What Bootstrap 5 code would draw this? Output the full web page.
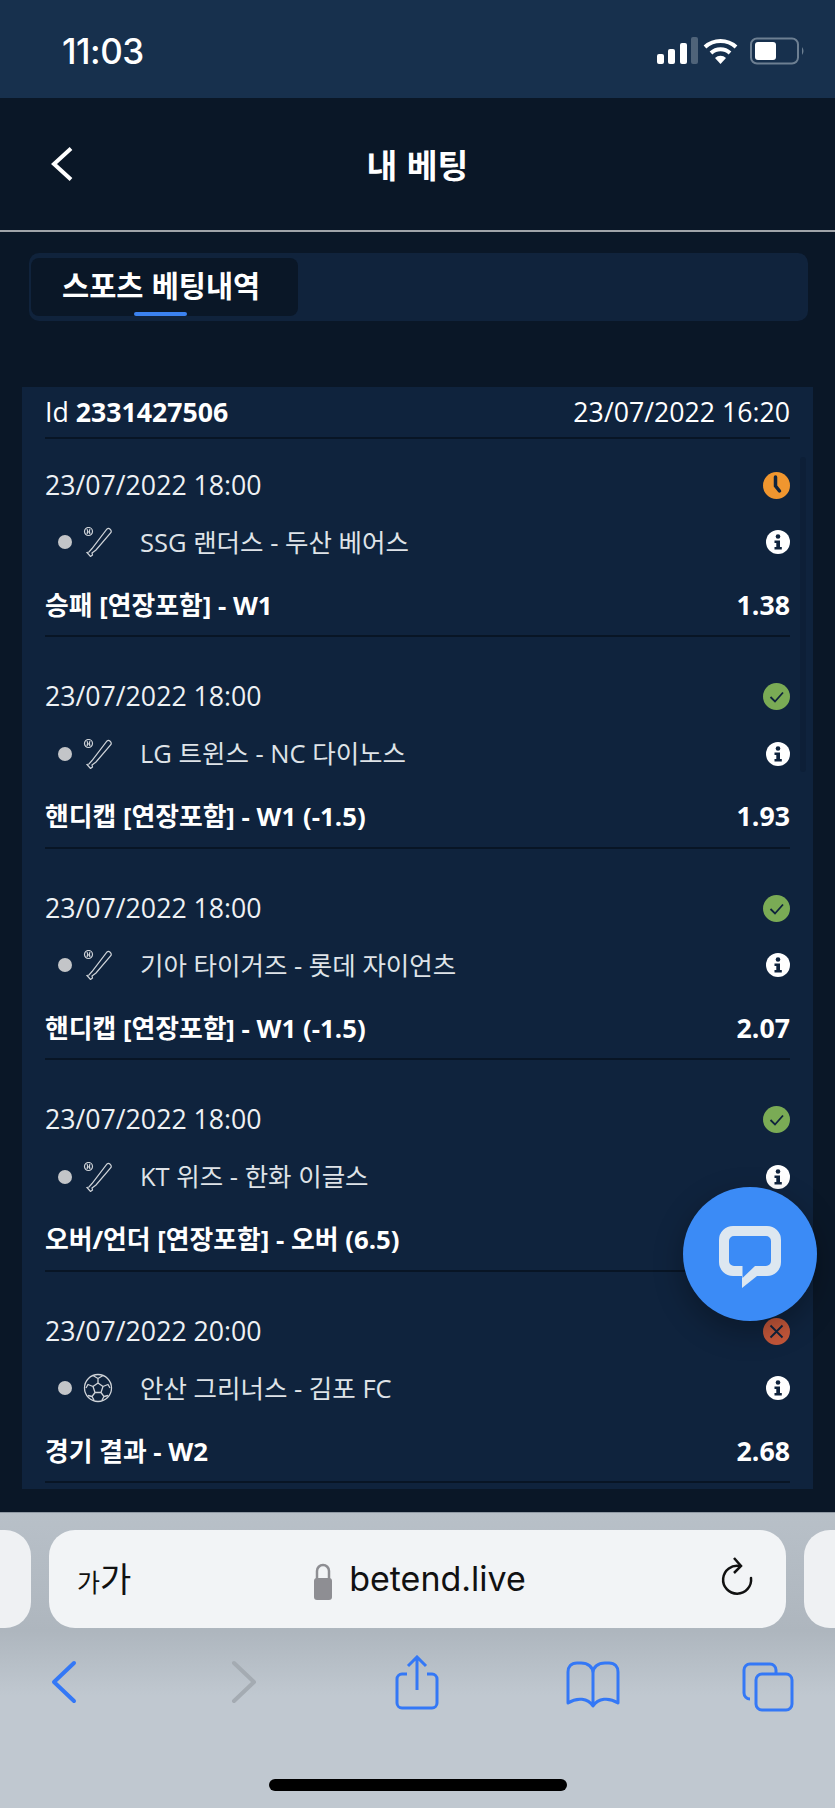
<!DOCTYPE html>
<html lang="ko">
<head>
<meta charset="utf-8">
<link href="https://cdn.jsdelivr.net/npm/bootstrap@5.3.0/dist/css/bootstrap.min.css" rel="stylesheet">
<style>
html,body{margin:0;background:#0a1727}
.phone{width:835px;height:1808px;overflow:hidden;position:relative;background:#0a1727;color:#fff;font-family:"Open Sans","Noto Sans CJK KR",sans-serif}
.status-strip{height:98px;background:#17304d;padding:4px 23px 0 62px}
.clock{font-family:"Inter","Liberation Sans",sans-serif;font-size:35px;font-weight:500;letter-spacing:-.5px}
.page-head{height:134px;border-bottom:2px solid #a0a4a9;padding:0 50px}
.page-title{font-size:33.500px;font-weight:700;font-family:"Noto Sans CJK KR",sans-serif;line-height:1}
.back-link{position:absolute;left:50px;top:146px;display:block;line-height:0}
.tab-shell{margin:21px 27px 0 29px;height:68px;background:#10233c;border-radius:10px;padding:5px 2px}
.tab-on{width:267px;height:58px;background:#0a1727;border-radius:8px;font-size:29.500px;font-weight:700;font-family:"Noto Sans CJK KR",sans-serif;position:relative;padding:7px 0 0 31px;line-height:1.3}
.tab-on::after{content:"";position:absolute;left:103px;bottom:0;width:53px;height:4px;border-radius:2px;background:#3b82f0}
.bet-panel{margin:66px 22px 0 22px;height:1102px;background:#0f233d;padding:0 23px;position:relative;overflow:hidden}
.bet-head{height:52px;border-bottom:2px solid #081525;font-size:26.700px;line-height:1}
.leg-list{padding-top:22px}
.leg{height:211.500px}
.leg-inner{height:176px;border-bottom:2px solid #081525;display:flex;flex-direction:column}
.leg-date{height:48px;font-size:26.700px;color:#eef1f4}
.leg-teams{height:66px;font-size:25.500px;color:#dfe3e8}
.leg-mkt{font-size:25.800px;font-weight:700;height:60px}
.leg-odd{font-size:26.700px}
.live-dot{width:14px;height:14px;border-radius:50%;background:#c3c5c8;margin:0 11px 0 13px;flex:none}
.sport-ico{width:30px;height:30px;margin-right:27px;flex:none}
.state-ico{width:27px;height:27px;flex:none}
.info-ico{width:24px;height:24px;flex:none}
.rail{position:absolute;left:778px;top:70px;width:6px;height:315px;background:#0d1f37;border-radius:3px}
.chat-fab{position:absolute;left:683px;top:1187px;width:134px;height:134px;border-radius:50%;background:#3b8bf6;box-shadow:0 10px 30px rgba(0,0,0,.3)}
.chat-glyph{margin-top:6px}
.safari{position:absolute;left:0;right:0;top:1512px;height:296px;background:linear-gradient(#b8c0c8,#aeb6be 40%,#c0c8d0 62%);border-top:1px solid #8f99a3}
.url-pill{position:absolute;left:49px;top:17px;width:737px;height:98px;background:#f2f4f6;border-radius:26px}
.side-pill{position:absolute;top:17px;height:98px;width:71px;background:#eff1f3;border-radius:26px}
.pill-left{left:-40px}
.pill-right{left:804px}
.aa-txt{position:absolute;left:28px;top:26px;color:#111;font-family:"Noto Sans CJK KR",sans-serif;line-height:1.3;font-size:34px}
.aa-small{font-size:25px}
.host-txt{font-size:34px;color:#111;font-family:"Inter","Liberation Sans",sans-serif;line-height:1}
.tool-ico{position:absolute;display:block}
.t-reload{right:32px;top:27px}
.t-back{left:50px;top:147px}
.t-fwd{left:230px;top:147px}
.t-share{left:394px;top:142px}
.t-book{left:565px;top:148px}
.t-tabs{left:742px;top:149px}
.home-bar{position:absolute;left:269px;top:266px;width:298px;height:12px;border-radius:6px;background:#000}
</style>
</head>
<body>
<div class="phone d-flex flex-column">
  <div class="status-strip d-flex justify-content-between align-items-center">
    <span class="clock">11:03</span>
    <svg width="157" height="28" viewBox="0 0 157 28"><g fill="#fff"><rect x="2" y="17" width="7" height="10" rx="2"/><rect x="13" y="12" width="7" height="15" rx="2"/><rect x="25" y="6" width="7" height="21" rx="2"/></g><rect x="36" y="0" width="7" height="27" rx="2" fill="#4f6379"/><g fill="none" stroke="#fff" stroke-width="4"><path d="M50 10a23 23 0 0 1 31 0"/><path d="M56 16a14 14 0 0 1 19 0"/></g><path d="M60 21a8 8 0 0 1 11 0l-5.500 6z" fill="#fff"/><rect x="96" y="1.500" width="47" height="25" rx="6" fill="none" stroke="#6d7f92" stroke-width="2"/><rect x="100" y="5" width="21" height="18" rx="3" fill="#fff"/><path d="M147 10q3 4 0 8z" fill="#6d7f92"/></svg>
  </div>
  <div class="page-head d-flex align-items-center justify-content-center">
    <span class="page-title">내 베팅</span>
  </div>
  <a class="back-link" href="#"><svg width="24" height="36" viewBox="0 0 24 36"><path d="M21 2.500 4 18l17 15.500" fill="none" stroke="#fff" stroke-width="4"/></svg></a>
  <div class="tab-shell">
    <div class="tab-on"><span>스포츠 베팅내역</span></div>
  </div>
  <div class="bet-panel">
    <div class="bet-head d-flex justify-content-between align-items-center"><span>Id <b>2331427506</b></span><span>23/07/2022 16:20</span></div>
    <div class="rail"></div>
    <div class="leg-list">

    <section class="leg"><div class="leg-inner">
      <div class="leg-date d-flex justify-content-between align-items-center"><span>23/07/2022 18:00</span>
        <svg class="state-ico" viewBox="0 0 27 27"><circle cx="13.500" cy="13.500" r="13.500" fill="#f0962f"/><path d="M12.500 5v9l4 5" fill="none" stroke="#0f233d" stroke-width="3.500" stroke-linecap="round"/></svg></div>
      <div class="leg-teams d-flex align-items-center"><i class="live-dot"></i>
        <svg class="sport-ico" viewBox="0 0 30 30"><use href="#bat"/></svg><span class="flex-grow-1">SSG 랜더스 - 두산 베어스</span><svg class="info-ico" viewBox="0 0 24 24"><use href="#inf"/></svg></div>
      <div class="leg-mkt d-flex justify-content-between align-items-center"><span>승패 [연장포함] - W1</span><span class="leg-odd">1.38</span></div>
    </div></section>

    <section class="leg"><div class="leg-inner">
      <div class="leg-date d-flex justify-content-between align-items-center"><span>23/07/2022 18:00</span>
        <svg class="state-ico" viewBox="0 0 27 27"><use href="#won"/></svg></div>
      <div class="leg-teams d-flex align-items-center"><i class="live-dot"></i>
        <svg class="sport-ico" viewBox="0 0 30 30"><use href="#bat"/></svg><span class="flex-grow-1">LG 트윈스 - NC 다이노스</span><svg class="info-ico" viewBox="0 0 24 24"><use href="#inf"/></svg></div>
      <div class="leg-mkt d-flex justify-content-between align-items-center"><span>핸디캡 [연장포함] - W1 (-1.5)</span><span class="leg-odd">1.93</span></div>
    </div></section>

    <section class="leg"><div class="leg-inner">
      <div class="leg-date d-flex justify-content-between align-items-center"><span>23/07/2022 18:00</span>
        <svg class="state-ico" viewBox="0 0 27 27"><use href="#won"/></svg></div>
      <div class="leg-teams d-flex align-items-center"><i class="live-dot"></i>
        <svg class="sport-ico" viewBox="0 0 30 30"><use href="#bat"/></svg><span class="flex-grow-1">기아 타이거즈 - 롯데 자이언츠</span><svg class="info-ico" viewBox="0 0 24 24"><use href="#inf"/></svg></div>
      <div class="leg-mkt d-flex justify-content-between align-items-center"><span>핸디캡 [연장포함] - W1 (-1.5)</span><span class="leg-odd">2.07</span></div>
    </div></section>

    <section class="leg"><div class="leg-inner">
      <div class="leg-date d-flex justify-content-between align-items-center"><span>23/07/2022 18:00</span>
        <svg class="state-ico" viewBox="0 0 27 27"><use href="#won"/></svg></div>
      <div class="leg-teams d-flex align-items-center"><i class="live-dot"></i>
        <svg class="sport-ico" viewBox="0 0 30 30"><use href="#bat"/></svg><span class="flex-grow-1">KT 위즈 - 한화 이글스</span><svg class="info-ico" viewBox="0 0 24 24"><use href="#inf"/></svg></div>
      <div class="leg-mkt d-flex justify-content-between align-items-center"><span>오버/언더 [연장포함] - 오버 (6.5)</span></div>
    </div></section>

    <section class="leg"><div class="leg-inner">
      <div class="leg-date d-flex justify-content-between align-items-center"><span>23/07/2022 20:00</span>
        <svg class="state-ico" viewBox="0 0 27 27"><circle cx="13.500" cy="13.500" r="13.500" fill="#c4573a"/><path d="M7.500 7.500l12 12M19.500 7.500l-12 12" stroke="#0f233d" stroke-width="1.800" fill="none"/></svg></div>
      <div class="leg-teams d-flex align-items-center"><i class="live-dot"></i>
        <svg class="sport-ico" viewBox="0 0 30 30"><g fill="none" stroke="#cfd3d8" stroke-width="1.300"><circle cx="15" cy="15" r="13.500"/><path d="M15 10l5 3.500-2 6h-6l-2-6zM15 10V5.500l-5-3M15 5.500l5-3M20 13.500l5-2 2 3.500M10 13.500l-5-2-2 3.500M18 19.500l3 4-2 3.500M12 19.500l-3 4 2 3.500M9 23.500l-4-1M21 23.500l4-1"/></g></svg><span class="flex-grow-1">안산 그리너스 - 김포 FC</span><svg class="info-ico" viewBox="0 0 24 24"><use href="#inf"/></svg></div>
      <div class="leg-mkt d-flex justify-content-between align-items-center"><span>경기 결과 - W2</span><span class="leg-odd">2.68</span></div>
    </div></section>
    </div>
  </div>

  <svg width="0" height="0" class="position-absolute"><defs>
    <g id="bat" fill="none" stroke="#cfd3d8" stroke-width="1.200"><circle cx="5.500" cy="4.500" r="4"/><path d="M4 2q1.500 2.500 0 5M7 2q-1.500 2.500 0 5"/><path d="M24 2c2-1.500 5 1 4 3.500L13 23l-4 3 .5 2-2 1.500-3.500-4 2-.5 3-3.500z"/></g>
    <g id="won"><circle cx="13.500" cy="13.500" r="13.500" fill="#7aab55"/><path d="M7.500 14l4.500 4.500 8-9" stroke="#0f233d" stroke-width="1.800" fill="none"/></g>
    <g id="inf"><circle cx="12" cy="12" r="12" fill="#fff"/><circle cx="12" cy="6.500" r="2.300" fill="#0f233d"/><path d="M8.500 10.500H14V17h1.800v2.500H8.500V17h1.800v-4H8.500z" fill="#0f233d"/></g>
  </defs></svg>

  <div class="chat-fab d-flex align-items-center justify-content-center">
    <svg class="chat-glyph" width="62" height="62" viewBox="0 0 62 62"><path d="M14 0h34a14 14 0 0 1 14 14v22a14 14 0 0 1-14 14H38L23 62V50H14A14 14 0 0 1 0 36V14A14 14 0 0 1 14 0zM15 10a5 5 0 0 0-5 5v20a5 5 0 0 0 5 5h8.500V52L36 40h11a5 5 0 0 0 5-5V15a5 5 0 0 0-5-5z" fill="#dde7f0" fill-rule="evenodd"/></svg>
  </div>

  <div class="safari">
    <div class="side-pill pill-left"></div>
    <div class="side-pill pill-right"></div>
    <div class="url-pill d-flex align-items-center justify-content-center gap-3">
      <span class="aa-txt"><span class="aa-small">가</span>가</span>
      <svg width="20" height="44" viewBox="0 0 20 44" class="ms-1"><path d="M4 22v-8a6 6 0 0 1 12 0v8" fill="none" stroke="#8e8e93" stroke-width="2.500"/><rect x="1" y="21" width="18" height="22" rx="3" fill="#8e8e93"/></svg>
      <span class="host-txt">betend.live</span>
      <svg class="tool-ico t-reload" width="36" height="40" viewBox="0 0 36 40"><path d="M22 9a14 14 0 1 0 11 12" fill="none" stroke="#111" stroke-width="2.500" stroke-linecap="round"/><path d="M16 1l7 8-7 7" fill="none" stroke="#111" stroke-width="2.500"/></svg>
    </div>
    <svg class="tool-ico t-back" width="28" height="44" viewBox="0 0 28 44"><path d="M24 3 4 22l20 19" fill="none" stroke="#3478f6" stroke-width="4" stroke-linecap="round" stroke-linejoin="round"/></svg>
    <svg class="tool-ico t-fwd" width="28" height="44" viewBox="0 0 28 44"><path d="M4 3l20 19L4 41" fill="none" stroke="#a4abb2" stroke-width="4" stroke-linecap="round" stroke-linejoin="round"/></svg>
    <svg class="tool-ico t-share" width="46" height="56" viewBox="0 0 46 56"><path d="M13 19H8a5 5 0 0 0-5 5v24a5 5 0 0 0 5 5h30a5 5 0 0 0 5-5V24a5 5 0 0 0-5-5h-5M23 35V3M14 11l9-9 9 9" fill="none" stroke="#3478f6" stroke-width="3"/></svg>
    <svg class="tool-ico t-book" width="56" height="48" viewBox="0 0 56 48"><path d="M28 12C28 6 23 2 16 2H12C6 2 3 6 3 11V42C12 36 23 37 28 45C33 37 44 36 53 42V11C53 6 50 2 44 2H40C33 2 28 6 28 12ZM28 12V44" fill="none" stroke="#3478f6" stroke-width="3" stroke-linejoin="round"/></svg>
    <svg class="tool-ico t-tabs" width="52" height="50" viewBox="0 0 52 50"><path d="M8 37a6 6 0 0 1-6-6V8a6 6 0 0 1 6-6h20a6 6 0 0 1 6 6v4" fill="none" stroke="#3478f6" stroke-width="3"/><rect x="14" y="12" width="36" height="36" rx="6" fill="none" stroke="#3478f6" stroke-width="3"/></svg>
    <div class="home-bar"></div>
  </div>
</div>
</body>
</html>
